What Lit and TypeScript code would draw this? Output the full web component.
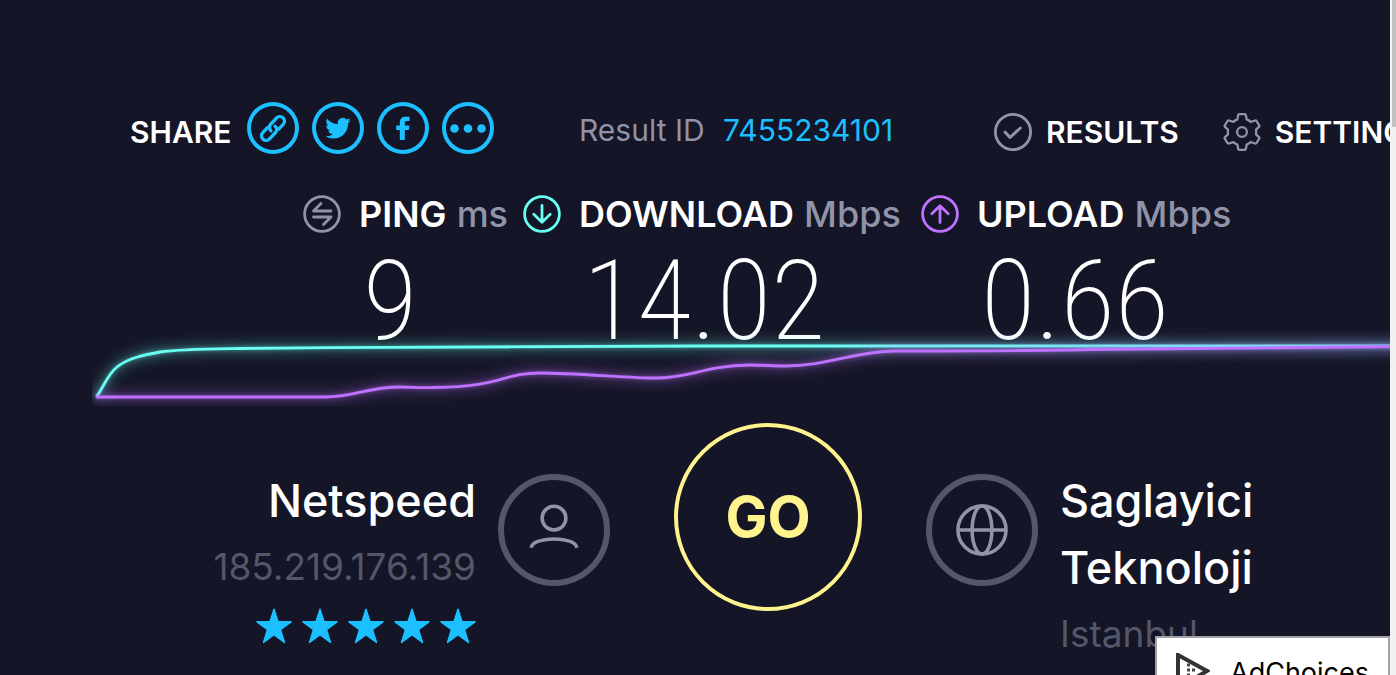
import { LitElement, html, css, svg } from "lit";
import { customElement } from "lit/decorators.js";

const linkIcon = html`<svg viewBox="0 0 52 52" aria-hidden="true">
  <g fill="none" stroke="currentColor" stroke-width="3.400" stroke-linecap="round" transform="translate(26 26.500) rotate(-47)">
    <path d="M-3.500-4.600H-10a4.600 4.600 0 0 0 0 9.200h8.500a4.600 4.600 0 0 0 4.600-4.600" />
    <path d="M3.500 4.600H10a4.600 4.600 0 0 0 0-9.200h-8.500a4.600 4.600 0 0 0-4.600 4.600" />
  </g>
</svg>`;

const twitterIcon = html`<svg viewBox="0 0 52 52" aria-hidden="true">
  <path fill="currentColor" transform="translate(13.300 13.500) scale(1.060)"
    d="M23.950 4.570a10 10 0 0 1-2.820.770 4.960 4.960 0 0 0 2.160-2.720c-.950.550-2 .960-3.130 1.180a4.920 4.920 0 0 0-8.380 4.480C7.690 8.090 4.070 6.130 1.640 3.160a4.820 4.820 0 0 0-.670 2.480c0 1.710.870 3.210 2.190 4.100a4.900 4.900 0 0 1-2.230-.620v.060a4.920 4.920 0 0 0 3.950 4.830 5 5 0 0 1-2.210.080 4.940 4.940 0 0 0 4.600 3.420A9.870 9.870 0 0 1 0 19.540a14 14 0 0 0 7.550 2.210c9.050 0 14-7.500 14-13.980 0-.210 0-.420-.020-.630a9.900 9.900 0 0 0 2.460-2.550z" />
</svg>`;

const facebookIcon = html`<svg viewBox="0 0 52 52" aria-hidden="true">
  <path fill="currentColor"
    d="M22.800 38V28h-3.600v-4.500h3.600v-3.200c0-3.600 2.200-5.600 5.600-5.600h4.200v4.400h-2.700c-1.600 0-2.100.8-2.100 2v2.400h4.600l-.6 4.500h-4V38z" />
</svg>`;

const moreIcon = html`<svg viewBox="0 0 52 52" aria-hidden="true">
  <g fill="currentColor"><circle cx="12.500" cy="26.500" r="4.300" /><circle cx="26" cy="26.500" r="4.300" /><circle cx="39.500" cy="26.500" r="4.300" /></g>
</svg>`;

const checkIcon = html`<svg class="nav-icon" viewBox="0 0 38 38" aria-hidden="true">
  <g fill="none" stroke="currentColor" stroke-width="2.800">
    <circle cx="19" cy="19" r="17.600" />
    <path d="M11 19l5 5.500 10.300-9.500" stroke-width="3" stroke-linecap="round" stroke-linejoin="round" />
  </g>
</svg>`;

const gearIcon = html`<svg class="nav-icon" viewBox="0 0 38 38" aria-hidden="true">
  <g fill="none" stroke="currentColor" stroke-width="2.300" stroke-linejoin="round">
    <circle cx="19" cy="19" r="4.900" />
    <path d="M16.200 1.200h5.600q.8 0 1 .8l.9 4.400q2.200.8 3.900 2.400l4.600-1.300q.9-.2 1.300.5l2.700 4.300q.5.900-.2 1.500l-3 2.900q.4 2.300 0 4.600l3 2.900q.7.600.2 1.500l-2.700 4.300q-.4.700-1.300.5l-4.600-1.300q-1.700 1.600-3.900 2.400l-.9 4.400q-.2.800-1 .8h-5.600q-.8 0-1-.8l-.9-4.400q-2.200-.8-3.900-2.400l-4.600 1.300q-.9.200-1.300-.5l-2.700-4.300q-.5-.9.200-1.500l3-2.900q-.4-2.300 0-4.600l-3-2.900q-.7-.6-.2-1.500l2.700-4.300q.4-.7 1.300-.5l4.600 1.300q1.700-1.600 3.900-2.400l.9-4.400q.2-.8 1-.8z" />
  </g>
</svg>`;

const pingGlyph = svg`<path d="M28 16H10.500L18 8.500M10.500 22H28L20.500 29.500" />`;
const downGlyph = svg`<path d="M19 10.500v16.500M10.800 19.200L19 27.200l8.200-8" />`;
const upGlyph = svg`<path d="M19 27.500V11M10.800 18.800L19 10.800l8.200 8" />`;

const metrics = [
  { name: "PING", unit: "ms", value: "9", tone: "ping", glyph: pingGlyph },
  { name: "DOWNLOAD", unit: "Mbps", value: "14.02", tone: "download", glyph: downGlyph },
  { name: "UPLOAD", unit: "Mbps", value: "0.66", tone: "upload", glyph: upGlyph },
];

const shares = [
  { label: "Copy link", icon: linkIcon },
  { label: "Twitter", icon: twitterIcon },
  { label: "Facebook", icon: facebookIcon },
  { label: "More", icon: moreIcon },
];

@customElement("app-root")
export class AppRoot extends LitElement {
  static styles = css`
    :host {
      display: flex;
      position: relative;
      height: 100vh;
      overflow: hidden;
      background: #141526;
      color: #fff;
      font-family: Inter, "Open Sans", sans-serif;
    }
    * { box-sizing: border-box; }
    a { color: inherit; text-decoration: none; }
    button { font: inherit; color: inherit; background: none; cursor: pointer; padding: 0; }
    svg { display: block; }
    .page { flex: 1; min-width: 0; overflow: hidden; position: relative; padding-top: 102px; }
    .topbar {
      display: grid;
      grid-template-columns: minmax(0, 449fr) minmax(0, 415fr) minmax(0, 396fr);
      align-items: center;
      height: 60px;
      padding-left: 130px;
      white-space: nowrap;
    }
    .share, .nav, .nav-link, .share-list { display: flex; align-items: center; }
    .share { gap: 16px; }
    .caption { font-size: 30px; font-weight: 600; }
    .share-list { gap: 13px; margin-bottom: 8px; }
    .share-button {
      width: 52px;
      height: 52px;
      border: 0;
      border-radius: 50%;
      box-shadow: inset 0 0 0 4px #1cbfff;
      color: #1cbfff;
    }
    .result { font-size: 30px; color: #9193a8; margin-bottom: 4px; }
    .result-link { color: #1cbfff; margin-left: 10px; }
    .nav { gap: 44px; }
    .nav-link { gap: 14px; }
    .nav-icon { width: 38px; height: 38px; color: #9193a8; flex: none; }

    .metrics {
      display: grid;
      grid-template-columns: minmax(0, 220fr) minmax(0, 398fr) minmax(0, 469fr);
      padding: 32px 0 0 303px;
      white-space: nowrap;
    }
    .metric-head { display: flex; align-items: center; gap: 18px; height: 40px; font-size: 36px; line-height: 40px; }
    .metric-icon { width: 38px; height: 38px; flex: none; }
    .ping { color: #9193a8; }
    .download { color: #6afff3; }
    .upload { color: #bf71ff; }
    .metric-name { font-weight: 600; }
    .unit { color: #9193a8; font-weight: 500; }
    .value {
      padding: 26px 0 0 60px;
      height: 108px;
      line-height: 82px;
      font-family: "Roboto Condensed", "Liberation Sans Narrow", Roboto, sans-serif;
      font-weight: 200;
      font-size: 112px;
    }
    .chart { padding-left: 92px; position: relative; }
    .plot { width: 100%; height: 64px; overflow: visible; }

    .stage {
      display: grid;
      grid-template-columns: 1fr auto 1fr;
      column-gap: 64px;
      align-items: start;
      padding: 17px 0 0 146px;
    }
    .side { display: flex; gap: 22px; align-items: start; margin-top: 44px; }
    .provider { justify-content: flex-end; text-align: right; }
    .badge {
      width: 112px;
      height: 112px;
      margin-top: 7px;
      border: 6px solid #54566a;
      border-radius: 50%;
      color: #9193a8;
      flex: none;
    }
    .title { font-size: 45px; font-weight: 500; line-height: 67px; margin: 0; }
    .detail { font-size: 37px; line-height: 66px; margin: 0; color: #54566a; }
    .place { max-width: 220px; }
    .stars { display: flex; justify-content: flex-end; gap: 10px; padding-top: 8px; }
    .star { width: 36px; height: 36px; color: #1cbfff; }
    .go {
      width: 188px;
      height: 188px;
      border: 4px solid #fff38e;
      border-radius: 50%;
      color: #fff38e;
      font-size: 56px;
      font-weight: 700;
    }
    .ad {
      position: absolute;
      right: 0;
      bottom: 0;
      width: 235px;
      height: 39px;
      overflow: hidden;
      display: flex;
      align-items: flex-start;
      gap: 20px;
      padding: 15px 0 0 19px;
      border: 2px solid #a1a1a8;
      border-bottom: 0;
      background: #fff;
      color: #000;
      font-size: 27px;
      line-height: 40px;
    }
    .ad-icon { width: 34px; height: 38px; flex: none; }
    .scroll { flex: none; width: 6px; background: #f1f1f1; padding-left: 2px; }
    .thumb { height: 127px; background: #c1c1c1; }
  `;

  render() {
    return html`
      <main class="page">
        <header class="topbar">
          <div class="share">
            <span class="caption">SHARE</span>
            <div class="share-list">
              ${shares.map((s) => html`<button class="share-button" aria-label=${s.label}>${s.icon}</button>`)}
            </div>
          </div>
          <div class="result">Result ID <a class="result-link" href="#result">7455234101</a></div>
          <nav class="nav caption">
            <a class="nav-link" href="#results">${checkIcon}<span>RESULTS</span></a>
            <a class="nav-link" href="#settings">${gearIcon}<span>SETTINGS</span></a>
          </nav>
        </header>

        <section class="metrics">
          ${metrics.map(
            (m) => html`<div class="metric">
              <div class="metric-head">
                <svg class="metric-icon ${m.tone}" viewBox="0 0 38 38" aria-hidden="true">
                  <g fill="none" stroke="currentColor" stroke-width="2.800" stroke-linecap="round" stroke-linejoin="round">
                    <circle cx="19" cy="19" r="17.400" />${m.glyph}
                  </g>
                </svg>
                <span><span class="metric-name">${m.name}</span> <span class="unit">${m.unit}</span></span>
              </div>
              <div class="value">${m.value}</div>
            </div>`
          )}
        </section>

        <div class="chart">
          <svg class="plot" viewBox="0 0 1298 64" preserveAspectRatio="none" aria-hidden="true">
            <defs>
              <filter id="glow" filterUnits="userSpaceOnUse" x="0" y="-30" width="1320" height="94">
                <feGaussianBlur in="SourceGraphic" stdDeviation="7" result="wide" />
                <feGaussianBlur in="SourceGraphic" stdDeviation="2" result="near" />
                <feComponentTransfer in="near" result="soft"><feFuncA type="linear" slope="0.500" /></feComponentTransfer>
                <feMerge><feMergeNode in="wide" /><feMergeNode in="soft" /><feMergeNode in="SourceGraphic" /></feMerge>
              </filter>
            </defs>
            <g fill="none" stroke-width="2.800" stroke-linecap="round">
              <path filter="url(#glow)" stroke="#6afff3"
                d="M5 54C12 44 16 32 25 25C36 16 52 13 68 10C88 7 110 7 148 6.500C300 5 450 4 608 4L1310 4" />
              <path filter="url(#glow)" stroke="#bf71ff"
                d="M5 55H233C263 55 275 45 308 45C320 45 328 46 343 45.500C410 45 410 31 448 31C480 31 540 36 563 36C600 36 610 24 658 23C672 23 680 24 693 24C735 24 765 9 803 9C860 9 920 9 1000 7.500C1100 6 1200 5 1310 4.500" />
            </g>
          </svg>
        </div>

        <section class="stage">
          <div class="side provider">
            <div>
              <h2 class="title">Netspeed</h2>
              <p class="detail">185.219.176.139</p>
              <div class="stars" role="img" aria-label="5 of 5 stars">
                ${[1, 2, 3, 4, 5].map(
                  () => html`<svg class="star" viewBox="0 0 36 36">
                    <path fill="currentColor" stroke="currentColor" stroke-width="1.500" stroke-linejoin="round"
                      d="M18 1.200l4 12.600h13l-10.500 7.800 4 12.900L18 26.700 7.500 34.500l4-12.900L1 13.800h13z" />
                  </svg>`
                )}
              </div>
            </div>
            <svg class="badge" viewBox="0 0 101 101" aria-hidden="true">
              <g fill="none" stroke="currentColor" stroke-width="3.600">
                <circle cx="50.500" cy="38.500" r="12" />
                <path d="M27.500 68.500q.5-4 6-6.200 7-2.800 17-2.800t17 2.800q5.500 2.200 6 6.200" />
              </g>
            </svg>
          </div>
          <button class="go">GO</button>
          <div class="side">
            <svg class="badge" viewBox="0 0 101 101" aria-hidden="true">
              <g fill="none" stroke="currentColor" stroke-width="3.600">
                <circle cx="50.500" cy="50.500" r="24.300" />
                <ellipse cx="50.500" cy="50.500" rx="10" ry="24.300" />
                <path d="M26 50.500h49" />
              </g>
            </svg>
            <div class="place">
              <h2 class="title">Saglayici Teknoloji</h2>
              <p class="detail">Istanbul</p>
            </div>
          </div>
        </section>

        <a class="ad" href="#adchoices">
          <svg class="ad-icon" viewBox="0 0 34 38" aria-hidden="true">
            <path d="M2 2L31 18L2 35z" fill="#fff" stroke="#333" stroke-width="4" />
            <path d="M11 12h3M11 17h3M11 22h3M16 17h3" stroke="#444" stroke-width="3" />
          </svg>
          <span>AdChoices</span>
        </a>
      </main>
      <div class="scroll" aria-hidden="true"><div class="thumb"></div></div>
    `;
  }
}
